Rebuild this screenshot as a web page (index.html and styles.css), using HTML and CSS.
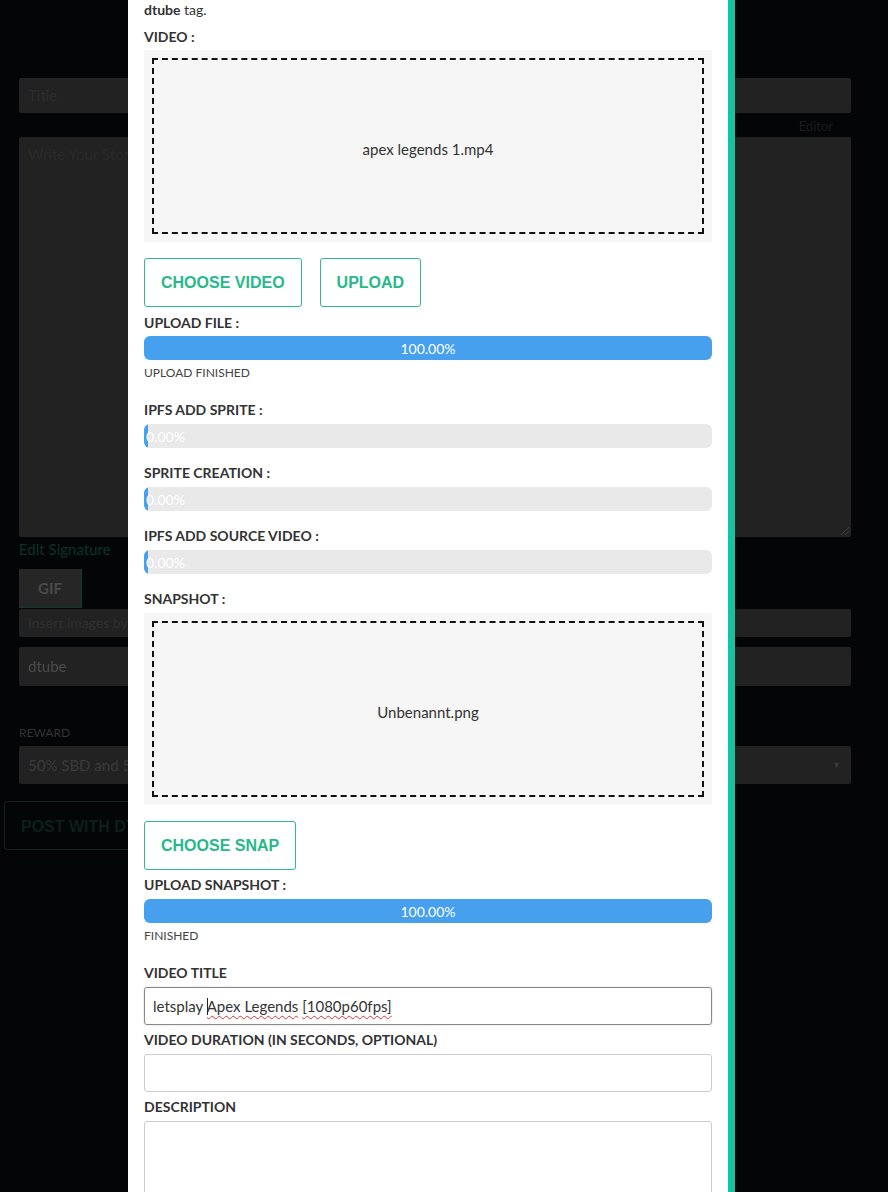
FILE: index.html
```html
<!DOCTYPE html>
<html lang="en">
<head>
  <meta charset="UTF-8" />
  <meta name="viewport" content="width=device-width, initial-scale=1" />
  <title>Upload video - DTube</title>
  <link rel="stylesheet" href="styles.css">
</head>
<body>
  <!-- editor page behind the modal -->
  <div class="page">
    <div class="bg-input">Title</div>
    <div class="editor-link">Editor</div>
    <div class="bg-textarea">Write Your Story...<span class="grip"></span></div>
    <div class="sig-link">Edit Signature</div>
    <div class="gif-row"><span class="gif-btn">GIF</span></div>
    <div class="bg-input thin">Insert images by dragging &amp; dropping, pasting from the clipboard, or by selecting them.</div>
    <div class="bg-input tags">dtube</div>
    <div class="reward-label">REWARD</div>
    <div class="bg-select">50% SBD and 50% SP<span class="caret">▼</span></div>
    <div class="post-btn">POST WITH DTUBE</div>
  </div>

  <div class="modal">
    <p class="note"><b>dtube</b> tag.</p>

    <div class="label first">VIDEO :</div>
    <div class="dropzone"><div class="dropzone-inner">apex legends 1.mp4</div></div>

    <div class="btn-row">
      <button class="btn-outline">CHOOSE VIDEO</button>
      <button class="btn-outline">UPLOAD</button>
    </div>

    <div class="label after-btn">UPLOAD FILE :</div>
    <div class="progress"><div class="progress-bar" style="width: 100%">100.00%</div></div>
    <div class="status">UPLOAD FINISHED</div>

    <div class="label after-status">IPFS ADD SPRITE :</div>
    <div class="progress"><div class="progress-bar empty">0.00%</div></div>

    <div class="label after-bar">SPRITE CREATION :</div>
    <div class="progress"><div class="progress-bar empty">0.00%</div></div>

    <div class="label after-bar">IPFS ADD SOURCE VIDEO :</div>
    <div class="progress"><div class="progress-bar empty">0.00%</div></div>

    <div class="label after-bar">SNAPSHOT :</div>
    <div class="dropzone"><div class="dropzone-inner">Unbenannt.png</div></div>

    <div class="btn-row">
      <button class="btn-outline">CHOOSE SNAP</button>
    </div>

    <div class="label after-btn-small">UPLOAD SNAPSHOT :</div>
    <div class="progress"><div class="progress-bar" style="width: 100%">100.00%</div></div>
    <div class="status">FINISHED</div>

    <div class="label after-status">VIDEO TITLE</div>
    <div class="text-input focused">letsplay <span class="caret-line"></span><span class="typo">Apex Legends</span> <span class="typo">[1080p60fps]</span></div>

    <div class="label after-input">VIDEO DURATION (IN SECONDS, OPTIONAL)</div>
    <div class="text-input"></div>

    <div class="label after-input">DESCRIPTION</div>
    <div class="text-input area"></div>
  </div>
</body>
</html>
```

FILE: styles.css
```css
body {
  margin: 0;
  font-family: 'Lato', 'Open Sans', sans-serif;
  background: #030507;
  color: #333;
  height: 1192px;
  overflow: hidden;
}

/* background page (dimmed) */
.page {
  padding: 78px 37px 0 19px;
  color: #2e2e2e;
  font-size: 15px;
}
.bg-input {
  background: #222;
  height: 35px;
  line-height: 35px;
  padding: 0 9px;
  border-radius: 2px;
  color: #2e2e2e;
}
.bg-input.thin {
  height: 28px;
  line-height: 28px;
  font-size: 14px;
  color: #303030;
}
.bg-input.tags {
  margin-top: 10px;
  height: 39px;
  line-height: 39px;
  color: #4a4a4a;
}
.editor-link {
  text-align: right;
  padding-right: 18px;
  height: 24px;
  line-height: 26px;
  font-size: 13px;
  color: #1c1c1c;
}
.bg-textarea {
  position: relative;
  background: #222;
  height: 400px;
  padding: 8px 9px;
  box-sizing: border-box;
  border-radius: 2px;
  color: #2a2a2a;
}
.grip {
  position: absolute;
  right: 2px;
  bottom: 2px;
  width: 8px;
  height: 8px;
  background: linear-gradient(135deg, transparent 45%, #3a3a3a 50%, transparent 58%, transparent 70%, #3a3a3a 75%, transparent 82%);
}
.sig-link {
  margin-top: 2px;
  line-height: 20px;
  color: #0c332a;
}
.gif-row {
  margin-top: 10px;
  height: 40px;
}
.gif-btn {
  display: inline-block;
  width: 63px;
  height: 39px;
  line-height: 39px;
  text-align: center;
  background: #262626;
  border-bottom: 1px solid #0e3a2f;
  border-right: 1px solid #0e3a2f;
  box-sizing: border-box;
  font-weight: 700;
  color: #4a4a4a;
}
.reward-label {
  margin-top: 39px;
  font-size: 12px;
  line-height: 16px;
  color: #333;
}
.bg-select {
  position: relative;
  margin-top: 5px;
  background: #222;
  height: 38px;
  line-height: 38px;
  padding: 0 9px;
  border-radius: 2px;
  color: #3a3a3a;
}
.caret {
  position: absolute;
  right: 10px;
  top: 0;
  font-size: 9px;
  color: #3a3a3a;
}
.post-btn {
  margin: 17px 0 0 -15px;
  width: 200px;
  height: 49px;
  line-height: 49px;
  border: 1px solid #12231e;
  border-radius: 3px;
  box-sizing: border-box;
  padding-left: 16px;
  font-family: 'Liberation Sans', Arial, sans-serif;
  font-weight: 700;
  font-size: 16px;
  color: #0a2019;
}

/* modal */
.modal {
  position: absolute;
  top: 0;
  left: 128px;
  width: 607px;
  height: 1192px;
  overflow: hidden;
  background: #fff;
  border-right: 7px solid #14c39f;
  padding: 0 16px;
  box-sizing: border-box;
}
.note {
  margin: 0;
  font-size: 14px;
  line-height: 20px;
  color: #333;
}
.label {
  font-size: 14px;
  font-weight: 700;
  line-height: 20px;
  color: #333;
  margin-bottom: 3px;
}
.label.first { margin-top: 7px; }
.label.after-btn { margin-top: 6px; }
.label.after-btn-small { margin-top: 5px; margin-bottom: 4px; }
.label.after-status { margin-top: 19px; margin-bottom: 4px; }
.label.after-bar { margin-top: 15px; margin-bottom: 4px; }
.label.after-input { margin-top: 5px; margin-bottom: 4px; }

.dropzone {
  background: #f6f6f6;
  padding: 8px;
  border-radius: 2px;
}
.dropzone-inner {
  height: 176px;
  padding-top: 5px;
  border: 2px dashed #111;
  box-sizing: border-box;
  display: flex;
  align-items: center;
  justify-content: center;
  font-size: 15px;
  color: #333;
}

.btn-row {
  display: flex;
  gap: 18px;
  margin-top: 16px;
}
.btn-outline {
  height: 49px;
  padding: 0 16px;
  background: #fff;
  border: 1px solid #2cbc8e;
  border-radius: 3px;
  font-family: 'Liberation Sans', Arial, sans-serif;
  font-weight: 700;
  font-size: 16px;
  color: #27b98b;
}

.progress {
  height: 24px;
  background: #e9e9e9;
  border-radius: 6px;
  overflow: hidden;
}
.progress-bar {
  height: 24px;
  line-height: 25px;
  background: #46a0ee;
  color: #fff;
  font-size: 14px;
  text-align: center;
  white-space: nowrap;
}
.progress-bar.empty {
  width: 2px;
  padding-left: 2px;
  text-align: left;
  overflow: visible;
}
.status {
  margin-top: 5px;
  font-size: 12px;
  line-height: 16px;
  color: #444;
}

.text-input {
  height: 38px;
  line-height: 37px;
  border: 1px solid #ccc;
  border-radius: 3px;
  box-sizing: border-box;
  padding: 0 8px;
  font-size: 15px;
  color: #333;
}
.text-input.focused {
  border-color: #888;
  box-shadow: 0 0 2px rgba(0, 0, 0, 0.2);
}
.text-input.area {
  height: 100px;
}
.caret-line {
  display: inline-block;
  width: 1px;
  height: 17px;
  background: #222;
  vertical-align: -3px;
  margin-right: -1px;
}
.typo {
  text-decoration: underline wavy #d33;
  text-decoration-thickness: 1px;
  text-underline-offset: 3px;
}
```
